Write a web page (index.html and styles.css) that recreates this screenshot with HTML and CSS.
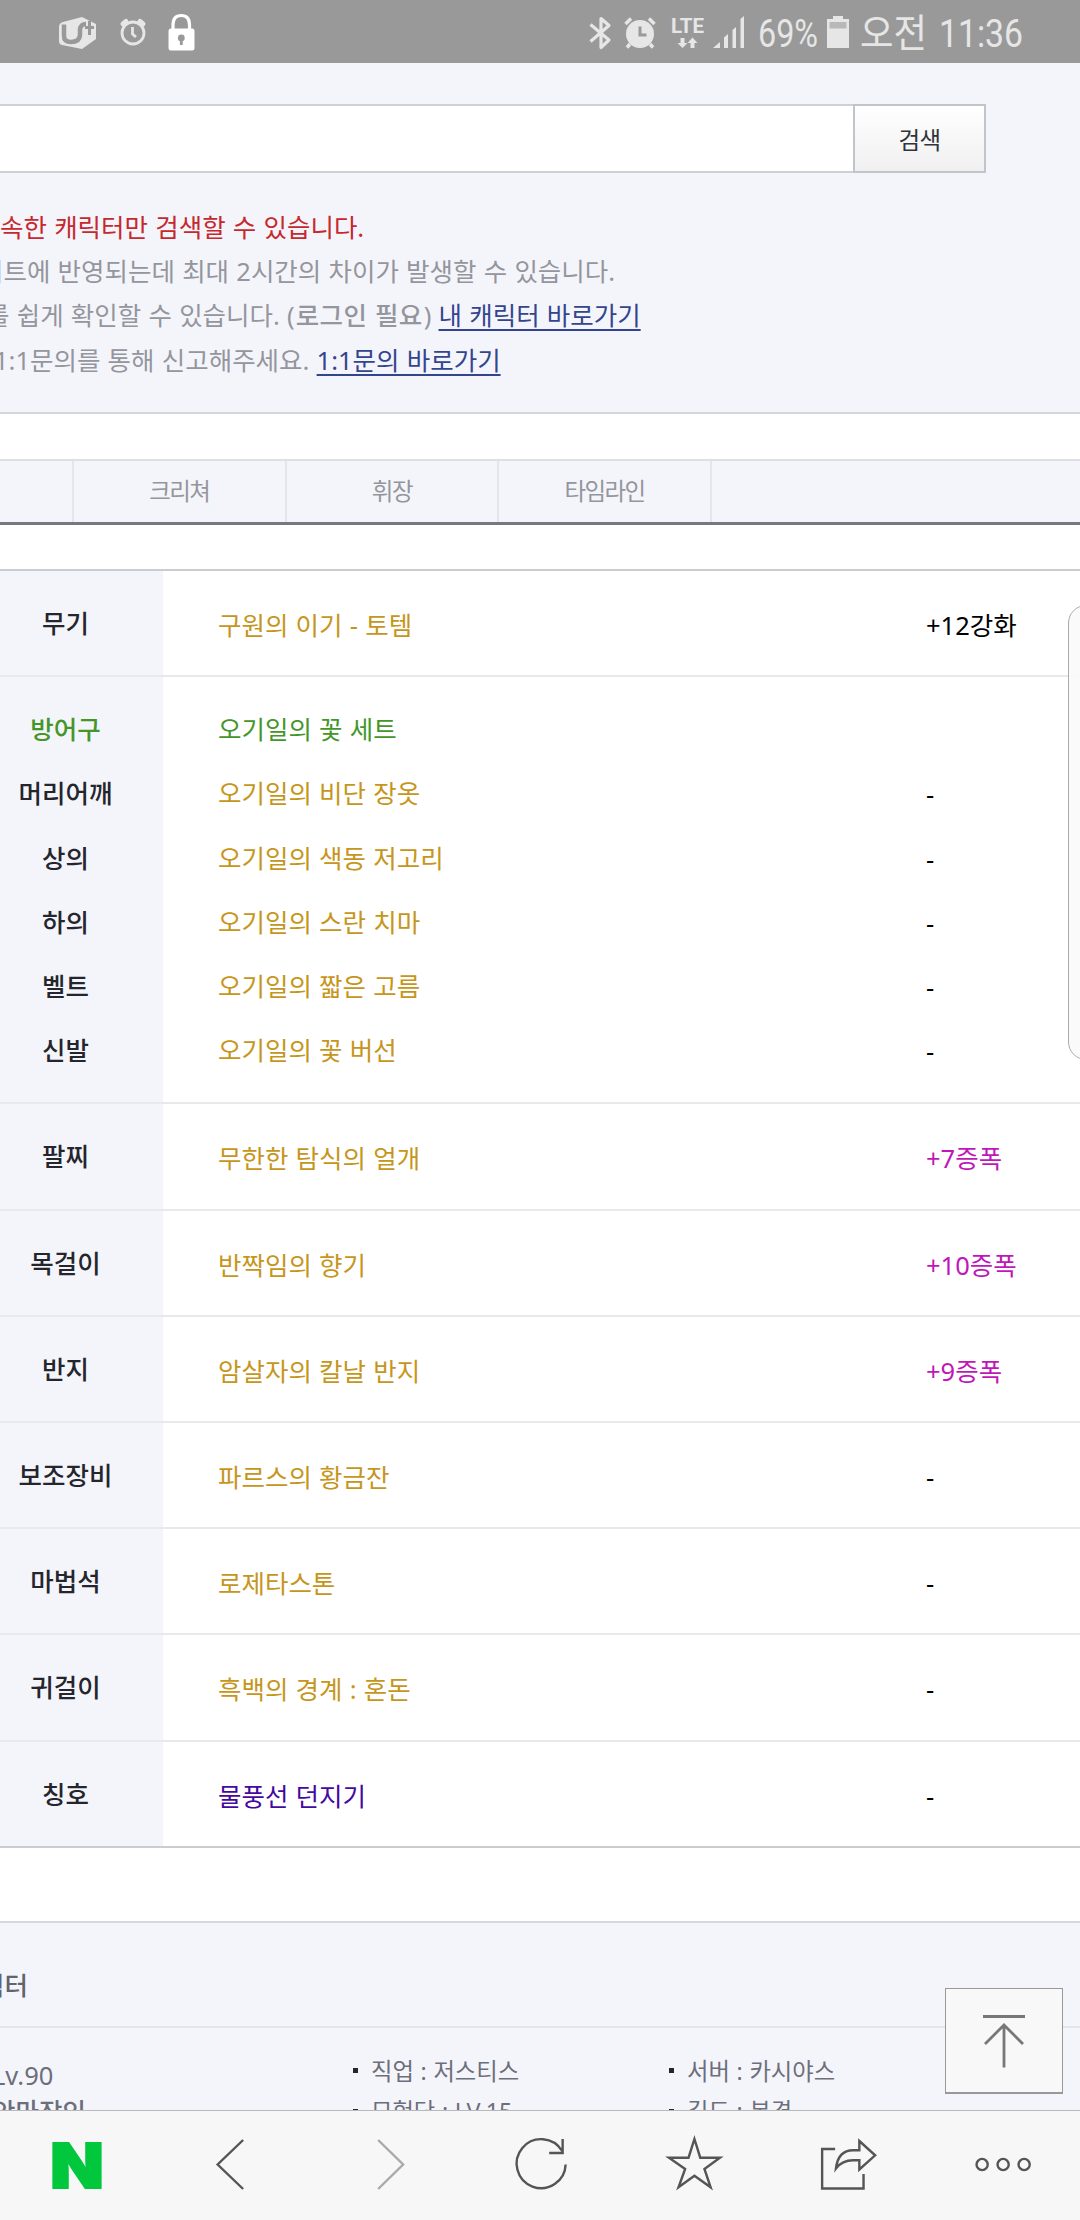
FILE: index.html
```
<!DOCTYPE html>
<html lang="ko">
<head>
    <meta charset="UTF-8">
    <title>캐릭터 검색</title>
    <link rel="stylesheet" href="styles.css">
</head>
<body>
<div class="status">
    <div class="status-left">
        <svg class="carrier" width="38" height="32" viewBox="0 0 38 32">
            <path d="M4 5 L23 0 L37 7 V22 L23 32 L3 28 Q0 27 0 24 V10 Q0 6 4 5z" fill="#e6e6e6"/>
            <path d="M5 7.500 V19 Q5 25 12 25 Q20.500 25 21 18 V12 Q22 7 27 7" fill="none" stroke="#999" stroke-width="4.5"/>
            <path d="M30.500 4 V18 M26 10.500 H35" stroke="#999" stroke-width="3"/>
        </svg>
        <svg class="clock" width="26" height="27" viewBox="0 0 26 27">
            <circle cx="13" cy="14" r="11" fill="none" stroke="#e6e6e6" stroke-width="2.8"/>
            <path d="M3 5 L6 2.5 M23 5 L20 2.5" stroke="#e6e6e6" stroke-width="5" stroke-linecap="round"/>
            <path d="M12.5 8 V15 L16 18" fill="none" stroke="#e6e6e6" stroke-width="2.8"/>
        </svg>
        <svg width="27" height="37" viewBox="0 0 27 37">
            <path d="M5 17 V11 Q5 1.5 13.3 1.5 Q21.5 1.5 21.5 11 V17" fill="none" stroke="#fff" stroke-width="3.2"/>
            <rect x="0.5" y="14.5" width="26" height="22" rx="2.5" fill="#fff"/>
            <circle cx="13.3" cy="24" r="3.4" fill="#999"/>
            <path d="M13.3 24 V31" stroke="#999" stroke-width="2.8"/>
        </svg>
    </div>
    <div class="status-right">
        <svg width="23" height="34" viewBox="0 0 23 34">
            <path d="M1.5 8.5 L20 24 L12 31.5 V2.5 L20 9.5 L1.5 25.5" fill="none" stroke="#e6e6e6" stroke-width="3.2" stroke-linejoin="round"/>
        </svg>
        <svg class="alarm" width="32" height="33" viewBox="0 0 32 33">
            <circle cx="16" cy="18" r="14" fill="#e6e6e6"/>
            <path d="M1.5 8 L7 2.5 M30.5 8 L25 2.5" stroke="#e6e6e6" stroke-width="3.5"/>
            <path d="M6 28 L3 31.5 M26 28 L29 31.5" stroke="#e6e6e6" stroke-width="3.5"/>
            <path d="M16 10.500 V19 H22.500" fill="none" stroke="#999" stroke-width="3"/>
        </svg>
        <svg class="lte" width="34" height="33" viewBox="0 0 34 33">
            <text x="0" y="16.500" textLength="33" lengthAdjust="spacingAndGlyphs">LTE</text>
            <path d="M9.500 22 h4 v5 h3 l-5 5 -5 -5 h3z M19.500 32 h4 v-5 h3 l-5 -5.500 -5 5.500 h3z" fill="#e6e6e6"/>
        </svg>
        <svg class="signal" width="32" height="33" viewBox="0 0 32 33">
            <path d="M0 32 L7 26 V32z M11 21.500 L15 18 V32 H11z M19.500 14 L23 11 V32 H19.500z M27.500 3 L31 0 V32 H27.500z" fill="#e6e6e6"/>
        </svg>
        <svg class="percent" width="60" height="40" viewBox="0 0 60 40">
            <text x="0" y="34" textLength="60" lengthAdjust="spacingAndGlyphs">69%</text>
        </svg>
        <svg class="battery" width="22" height="33" viewBox="0 0 22 33">
            <path d="M6 0 H16 V3 H22 V32 H0 V3 H6z" fill="#e6e6e6"/>
            <rect x="2.500" y="6" width="17" height="6.500" fill="#b8b8b8"/>
        </svg>
        <svg class="time" width="164" height="44" viewBox="0 0 164 44">
            <text x="0" y="36" textLength="67" lengthAdjust="spacingAndGlyphs">오전</text>
            <text x="79" y="36" textLength="84" lengthAdjust="spacingAndGlyphs">11:36</text>
        </svg>
    </div>
</div>

<div class="search">
    <div class="search-bar">
        <div class="search-input"></div>
        <button class="search-btn">검색</button>
    </div>
    <ul class="notes">
        <li class="red">속한 캐릭터만 검색할 수 있습니다.</li>
        <li class="n2">이트에 반영되는데 최대 2시간의 차이가 발생할 수 있습니다.</li>
        <li class="n3">를 쉽게 확인할 수 있습니다. (<b>로그인 필요</b>) <a href="#">내 캐릭터 바로가기</a></li>
        <li class="n4">1:1문의를 통해 신고해주세요. <a href="#">1:1문의 바로가기</a></li>
    </ul>
</div>

<ul class="tabs">
    <li class="tab-first"></li>
    <li>크리쳐</li>
    <li>휘장</li>
    <li>타임라인</li>
</ul>

<div class="equip">
    <div class="group">
        <div class="row"><div class="th">무기</div><div class="name">구원의 이기 - 토템</div><div class="val">+12강화</div></div>
    </div>
    <div class="group armor">
        <div class="row set"><div class="th">방어구</div><div class="name">오기일의 꽃 세트</div><div class="val"></div></div>
        <div class="row"><div class="th">머리어깨</div><div class="name">오기일의 비단 장옷</div><div class="val">-</div></div>
        <div class="row"><div class="th">상의</div><div class="name">오기일의 색동 저고리</div><div class="val">-</div></div>
        <div class="row"><div class="th">하의</div><div class="name">오기일의 스란 치마</div><div class="val">-</div></div>
        <div class="row"><div class="th">벨트</div><div class="name">오기일의 짧은 고름</div><div class="val">-</div></div>
        <div class="row"><div class="th">신발</div><div class="name">오기일의 꽃 버선</div><div class="val">-</div></div>
    </div>
    <div class="group">
        <div class="row"><div class="th">팔찌</div><div class="name">무한한 탐식의 얼개</div><div class="val amp">+7증폭</div></div>
    </div>
    <div class="group">
        <div class="row"><div class="th">목걸이</div><div class="name">반짝임의 향기</div><div class="val amp">+10증폭</div></div>
    </div>
    <div class="group">
        <div class="row"><div class="th">반지</div><div class="name">암살자의 칼날 반지</div><div class="val amp">+9증폭</div></div>
    </div>
    <div class="group">
        <div class="row"><div class="th">보조장비</div><div class="name">파르스의 황금잔</div><div class="val">-</div></div>
    </div>
    <div class="group">
        <div class="row"><div class="th">마법석</div><div class="name">로제타스톤</div><div class="val">-</div></div>
    </div>
    <div class="group">
        <div class="row"><div class="th">귀걸이</div><div class="name">흑백의 경계 : 혼돈</div><div class="val">-</div></div>
    </div>
    <div class="group">
        <div class="row"><div class="th">칭호</div><div class="name title">물풍선 던지기</div><div class="val">-</div></div>
    </div>
</div>

<div class="character">
    <h3>릭터</h3>
    <div class="info">
        <div class="who">
            <p>Lv.90</p>
            <p class="nick">안마장인</p>
        </div>
        <ul>
            <li>직업 : 저스티스</li>
            <li>모험단 : LV.15</li>
        </ul>
        <ul>
            <li>서버 : 카시야스</li>
            <li>길드 : 본격</li>
        </ul>
    </div>
</div>

<div class="edge-panel"></div>
<div class="top-btn">
    <svg width="44" height="54" viewBox="0 0 44 54" fill="none" stroke="#777" stroke-width="2.8">
        <path d="M1 2.500 H43 M22 11 V53.500 M3 30 L22 11 L41 30"/>
    </svg>
</div>

<div class="nav">
    <svg class="n-logo" viewBox="0 0 154 108"><text x="50" y="76.500" textLength="53.500" lengthAdjust="spacingAndGlyphs">N</text></svg>
    <svg viewBox="0 0 154 108"><path d="M89 29 L63.500 53.500 L89 78"/></svg>
    <svg class="off" viewBox="0 0 154 108"><path d="M69 29 L94 53.500 L69 78"/></svg>
    <svg viewBox="0 0 154 108"><path d="M99 40 A24.500 24.500 0 1 0 102.500 53.500 M99.500 28 V42 H86"/></svg>
    <svg viewBox="0 0 154 108"><path d="M77.300 28 L83.100 46.700 H102.800 L87.300 58 L93.500 76.300 L77.300 64.700 L61.400 76.300 L68 58 L51.800 46.700 H71.400z"/></svg>
    <svg viewBox="0 0 154 108"><path d="M64 38 H51 V77.500 H92.400 V63 M88.200 30 L104 44.300 L88.200 58.500 V49.300 H82 Q71 49.300 64.800 57.500 Q67 39.300 82 39.300 H88.200z"/></svg>
    <svg viewBox="0 0 154 108"><circle cx="56" cy="53.500" r="5.600"/><circle cx="77" cy="53.500" r="5.600"/><circle cx="98" cy="53.500" r="5.600"/></svg>
</div>
</body>
</html>
```
FILE: styles.css
```
* {
    margin: 0;
    padding: 0;
    box-sizing: border-box;
}

body {
    position: relative;
    width: 1080px;
    height: 2220px;
    overflow: hidden;
    display: flex;
    flex-direction: column;
    background: #fff;
    font: 25.5px/44px "Noto Sans", "Noto Sans CJK KR", sans-serif;
    word-spacing: 0.6px;
    color: #000;
}

ul {
    list-style: none;
}

/* 상태바 */
.status {
    flex: none;
    height: 63px;
    padding: 0 56px 0 59px;
    display: flex;
    justify-content: space-between;
    align-items: center;
    background: #999;
}

.status-left,
.status-right {
    display: flex;
    align-items: center;
    padding-top: 2px;
}

.status svg {
    overflow: visible;
}

.status text {
    fill: #e6e6e6;
    font-family: Roboto, "Noto Sans CJK KR", sans-serif;
    font-size: 39px;
}

.status .lte text {
    font-size: 21px;
    font-weight: 700;
}

.clock {
    margin: 0 22px 0 23px;
}

.alarm {
    margin: 0 15px 0 12px;
}

.signal {
    margin: 0 13px 0 8px;
}

.battery {
    margin: 0 11px 0 9px;
}

/* 검색 */
.search {
    flex: none;
    height: 351px;
    padding-top: 41px;
    background: #f4f5fa;
    border-bottom: 2px solid #d5d7de;
}

.search-bar {
    display: flex;
    width: 986px;
    height: 69px;
    margin-bottom: 32px;
}

.search-input {
    flex: 1;
    background: #fff;
    border: 2px solid #cfd0d6;
    border-width: 2px 0;
}

.search-btn {
    width: 133px;
    border: 2px solid #c3c4ca;
    background: linear-gradient(#fff, #f0f0f1);
    font: 23.5px "Noto Sans CJK KR", sans-serif;
    letter-spacing: -0.5px;
    color: #33333b;
}

.notes li {
    height: 44.2px;
    white-space: nowrap;
    color: #94959d;
}

.notes .red {
    color: #c6282e;
}

.notes .n2 {
    margin-left: -20px;
}

.notes .n3 {
    margin-left: -14px;
}

.notes .n4 {
    margin-left: -6px;
}

.notes b {
    margin: 0 1px;
    font-weight: 500;
    letter-spacing: 0.4px;
}

.notes a {
    color: #34458f;
    text-decoration: underline;
    text-decoration-thickness: 2px;
    text-underline-offset: 4px;
}

/* 탭 */
.tabs {
    flex: none;
    display: flex;
    height: 66px;
    margin: 45px 0 44px;
    background: #f4f5fa;
    border-top: 2px solid #dfe0e5;
    border-bottom: 3px solid #76777f;
}

.tabs li {
    width: 212.6px;
    border-right: 2px solid #e4e5eb;
    text-align: center;
    line-height: 61px;
    font-size: 23.5px;
    letter-spacing: -1.6px;
    color: #94959d;
}

.tabs .tab-first {
    width: 74px;
}

/* 장비 */
.equip {
    flex: none;
    border-top: 2px solid #cbccd0;
    border-bottom: 2px solid #cbccd0;
    background: linear-gradient(90deg, #f4f5fa 163px, #fff 163px);
}

.group {
    height: 106.2px;
    display: flex;
    flex-direction: column;
    justify-content: center;
    border-bottom: 2px solid #e8e9eb;
}

.group:last-child {
    height: 104.2px;
    border-bottom: none;
}

.armor {
    height: 427.2px;
}

.row {
    display: flex;
    height: 64.2px;
    line-height: 64.2px;
}

.th {
    width: 131px;
    text-align: center;
    font-family: "Noto Sans CJK KR", sans-serif;
    font-weight: 500;
    line-height: 62px;
    color: #25252d;
}

.name {
    width: 709px;
    padding-left: 87px;
    padding-top: 2px;
    color: #c6961c;
}

.val {
    padding-top: 2px;
    padding-left: 86px;
}

.armor .name {
    padding-top: 0;
}

.armor .val {
    padding-top: 1px;
}

.set .th,
.set .name {
    color: #45962a;
}

.name.title {
    color: #4508a0;
}

.amp {
    color: #c018b8;
}

/* 캐릭터 정보 */
.character {
    flex: none;
    height: 300px;
    margin-top: 73px;
    background: #f4f5fa;
    border-top: 2px solid #d5d7dc;
}

.character h3 {
    height: 105px;
    margin-left: -19px;
    line-height: 124px;
    font-size: 25.5px;
    font-weight: 500;
    color: #62636b;
    border-bottom: 2px solid #e4e5eb;
}

.info {
    display: flex;
    color: #6d6e7b;
}

.who {
    width: 353px;
    margin-left: -12px;
    padding: 25px 0 0 4px;
}

.who p {
    height: 36px;
}

.who .nick {
    font-weight: 500;
}

.info ul {
    width: 316px;
    padding-top: 23px;
    margin-left: 12px;
    font-size: 23.3px;
}

.info ul + ul {
    margin-left: 0;
}

.info li {
    display: flex;
    align-items: center;
    height: 40.5px;
}

.info li::before {
    content: "";
    width: 5px;
    height: 5px;
    margin-right: 13px;
    background: #25252d;
}

/* 화면 위에 떠 있는 요소 */
.edge-panel {
    position: absolute;
    top: 605px;
    left: 1068px;
    width: 40px;
    height: 455px;
    border: 1.500px solid #aaa;
    border-radius: 18px;
    background: rgba(250, 250, 250, 0.93);
}

.top-btn {
    position: absolute;
    top: 1988px;
    left: 945px;
    width: 118px;
    height: 106px;
    display: flex;
    justify-content: center;
    align-items: center;
    border: 1px solid #999;
    border-bottom-width: 2px;
    background: #f8f8f8;
}

.nav {
    position: absolute;
    left: 0;
    bottom: 0;
    width: 1080px;
    height: 110px;
    display: flex;
    border-top: 1px solid #b9b9bc;
    background: #f7f7f7;
}

.nav svg {
    flex: 1;
    height: 108px;
    fill: none;
    stroke: #555;
    stroke-width: 2.4;
}

.nav .off {
    stroke: #aaa;
}

.nav .n-logo text {
    font: 900 62px Inter, sans-serif;
    fill: #00c73c;
    stroke: #00c73c;
    stroke-width: 2;
}
```
